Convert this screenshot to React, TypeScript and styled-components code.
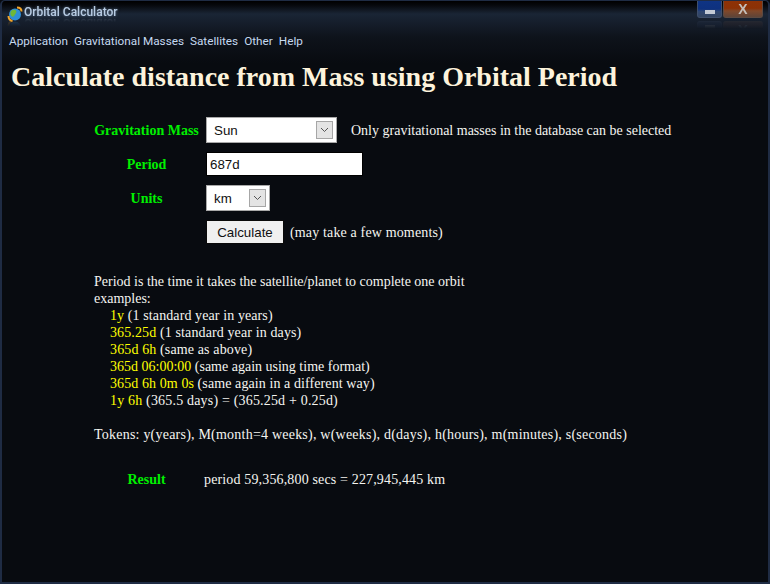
import React from "react";
import styled, { createGlobalStyle } from "styled-components";

const GlobalStyle = createGlobalStyle`
    html, body {
        margin: 0;
        padding: 0;
        background: #080b10;
    }
`;

const examples = [
    { code: "1y", note: "(1 standard year in years)", spacing: 0.1 },
    { code: "365.25d", note: "(1 standard year in days)", spacing: 0.12 },
    { code: "365d 6h", note: "(same as above)", spacing: 0.13 },
    { code: "365d 06:00:00", note: "(same again using time format)", spacing: 0 },
    { code: "365d 6h 0m 0s", note: "(same again in a different way)", spacing: 0.09 },
    { code: "1y 6h", note: "(365.5 days) = (365.25d + 0.25d)", spacing: 0.18 },
];

const menuItems = ["Application", "Gravitational Masses", "Satellites", "Other", "Help"];

const Window = styled.div`
    position: relative;
    width: 770px;
    height: 584px;
    box-sizing: border-box;
    overflow: hidden;
    border: 2px solid #1f2c44;
    border-top-width: 1px;
    border-radius: 5px 5px 0 0;
    background: linear-gradient(180deg, #000000 0, #06080c 4px, #1a2535 13px, #141c29 24px, #0e131b 36px, #080b10 62px);
    display: flex;
    flex-direction: column;
`;

const TitleBar = styled.div`
    height: 27px;
    flex: none;
    box-sizing: border-box;
    padding: 3px 0 0 5px;
    display: flex;
    align-items: flex-start;
    gap: 1px;
`;

const AppIcon = styled.svg`
    margin-top: 2px;
    flex: none;
    -webkit-box-reflect: below -2px linear-gradient(transparent 60%, rgba(255, 255, 255, 0.25));
`;

const AppTitle = styled.span`
    font: 500 12px Roboto, "Liberation Sans", Arial, sans-serif;
    line-height: 16px;
    color: #b9cde4;
    text-shadow: 0 0 3px rgba(170, 200, 235, 0.5);
    -webkit-box-reflect: below -5px linear-gradient(transparent 55%, rgba(255, 255, 255, 0.3));
`;

const WindowButtons = styled.div`
    position: absolute;
    top: 0;
    right: 5px;
    display: flex;
    gap: 1px;
    -webkit-box-reflect: below 3px linear-gradient(transparent 55%, rgba(255, 255, 255, 0.22));
`;

const WindowButton = styled.div<{ $close?: boolean }>`
    width: ${p => (p.$close ? "40px" : "25px")};
    height: 17px;
    box-sizing: border-box;
    border: 1px solid ${p => (p.$close ? "#5c4a42" : "#3f4f6c")};
    border-top: 0;
    border-radius: 0 0 3px 3px;
    display: grid;
    place-items: center;
    background: ${p =>
        p.$close
            ? "linear-gradient(180deg, #8e3206 0, #8c3105 45%, #80482a 62%, #5e4438 100%)"
            : "linear-gradient(180deg, #0f3484 0, #0e317f 50%, #2f4773 65%, #33445f 100%)"};
`;

const MinimizeGlyph = styled.span`
    width: 10px;
    height: 4px;
    margin-top: 5px;
    background: #c4cbd6;
`;

const CloseGlyph = styled.span`
    font: bold 14px "Liberation Sans", Arial, sans-serif;
    line-height: 13px;
    color: #c4bfba;
`;

const MenuBar = styled.nav`
    height: 26px;
    flex: none;
    box-sizing: border-box;
    padding: 5px 0 0 7px;
    display: flex;
    gap: 6px;
`;

const MenuItem = styled.span`
    font: 11.75px Roboto, "Liberation Sans", Arial, sans-serif;
    line-height: 16px;
    color: #c5d9f0;
`;

const Content = styled.main`
    flex: 1;
    font: 14px "Liberation Serif", "Times New Roman", serif;
    color: #f5f5f0;
`;

const Heading = styled.h1`
    margin: 0;
    padding: 7px 0 0 9px;
    font: bold 28px "Liberation Serif", "Times New Roman", serif;
    line-height: 32px;
    color: #fdf3dc;
`;

const FormGrid = styled.div`
    margin: 24px 0 0 92px;
    display: grid;
    grid-template-columns: 105px auto;
    row-gap: 9px;
    column-gap: 7px;
    justify-content: start;
    align-items: center;
`;

const FieldLabel = styled.label`
    padding-top: 2px;
    font: bold 14px "Liberation Serif", "Times New Roman", serif;
    color: #00f000;
    text-align: center;
    white-space: nowrap;
`;

const FieldRow = styled.div<{ $gap?: number }>`
    display: flex;
    align-items: center;
    gap: ${p => p.$gap ?? 14}px;
`;

const SelectBox = styled.div<{ $width: number }>`
    width: ${p => p.$width}px;
    height: 26px;
    box-sizing: border-box;
    border: 1px solid #a9a9a9;
    background: #ffffff;
    display: flex;
    align-items: center;
    justify-content: space-between;
    padding: 0 3px 0 7px;
    font: 13.33px "Liberation Sans", Arial, sans-serif;
    color: #111111;
`;

const SelectArrow = styled.span`
    width: 17px;
    height: 18px;
    box-sizing: border-box;
    border: 1px solid #a6a6a6;
    background: #e4e4e4;
    display: grid;
    place-items: center;
`;

const TextInput = styled.input`
    width: 157px;
    height: 24px;
    box-sizing: border-box;
    border: 1px solid #000000;
    outline: 0;
    padding: 0 3px;
    background: #ffffff;
    font: 13.33px "Liberation Sans", Arial, sans-serif;
    color: #111111;
`;

const CalcButton = styled.button`
    width: 78px;
    height: 24px;
    padding: 0;
    border: 1px solid #0a0a0a;
    background: #f0f0f0;
    font: 13.33px "Liberation Sans", Arial, sans-serif;
    color: #111111;
`;

const Hint = styled.span<{ $spacing?: number }>`
    padding-top: 2px;
    white-space: nowrap;
    letter-spacing: ${p => p.$spacing ?? 0}px;
`;

const HelpBlock = styled.section`
    margin: 29px 0 0 92px;
    line-height: 17px;
`;

const ExampleList = styled.div`
    padding-left: 16px;
`;

const ExampleRow = styled.div<{ $spacing: number }>`
    letter-spacing: ${p => p.$spacing}px;
`;

const Code = styled.span`
    color: #ffff00;
`;

const Tokens = styled.p`
    margin: 17px 0 0;
    letter-spacing: 0.22px;
`;

const ResultRow = styled.div`
    margin: 27px 0 0 92px;
    display: grid;
    grid-template-columns: 105px auto;
    column-gap: 5px;
    justify-content: start;
    align-items: center;
`;

const ResultText = styled.span`
    padding-top: 2px;
    letter-spacing: 0.15px;
`;

const Chevron = () => (
    <svg width="9" height="6" viewBox="0 0 9 6" fill="none" stroke="#555" strokeWidth="1">
        <path d="M1 1l3.5 3.5L8 1" />
    </svg>
);

const GlobeIcon = () => (
    <AppIcon width="16" height="16" viewBox="0 0 16 16">
        <circle cx="8" cy="8.5" r="6" fill="#2f8fd8" />
        <path d="M4 5c2-2 4-1.500 5-.5s0 3-1 4-1 3-3 2-2-3.500-1-5.500z" fill="#6fb83a" />
        <path d="M10 1.500c3 0 4.500 1.500 4.500 4" fill="none" stroke="#f2a52a" strokeWidth="2" />
        <path d="M1.500 10c0 3 1.500 4.500 4 5" fill="none" stroke="#f2a52a" strokeWidth="2" />
    </AppIcon>
);

const App: React.FunctionComponent = () => (
    <>
        <GlobalStyle />
        <Window>
            <TitleBar>
                <GlobeIcon />
                <AppTitle>Orbital Calculator</AppTitle>
            </TitleBar>
            <WindowButtons>
                <WindowButton>
                    <MinimizeGlyph />
                </WindowButton>
                <WindowButton $close>
                    <CloseGlyph>X</CloseGlyph>
                </WindowButton>
            </WindowButtons>
            <MenuBar>
                {menuItems.map(item => (
                    <MenuItem key={item}>{item}</MenuItem>
                ))}
            </MenuBar>
            <Content>
                <Heading>Calculate distance from Mass using Orbital Period</Heading>
                <FormGrid>
                    <FieldLabel>Gravitation Mass</FieldLabel>
                    <FieldRow>
                        <SelectBox $width={131}>
                            Sun
                            <SelectArrow>
                                <Chevron />
                            </SelectArrow>
                        </SelectBox>
                        <Hint>Only gravitational masses in the database can be selected</Hint>
                    </FieldRow>
                    <FieldLabel>Period</FieldLabel>
                    <FieldRow>
                        <TextInput defaultValue="687d" />
                    </FieldRow>
                    <FieldLabel>Units</FieldLabel>
                    <FieldRow>
                        <SelectBox $width={64}>
                            km
                            <SelectArrow>
                                <Chevron />
                            </SelectArrow>
                        </SelectBox>
                    </FieldRow>
                    <span />
                    <FieldRow $gap={6}>
                        <CalcButton>Calculate</CalcButton>
                        <Hint $spacing={0.15}>(may take a few moments)</Hint>
                    </FieldRow>
                </FormGrid>
                <HelpBlock>
                    <div>Period is the time it takes the satellite/planet to complete one orbit</div>
                    <div>examples:</div>
                    <ExampleList>
                        {examples.map(example => (
                            <ExampleRow key={example.code} $spacing={example.spacing}>
                                <Code>{example.code}</Code> {example.note}
                            </ExampleRow>
                        ))}
                    </ExampleList>
                    <Tokens>
                        Tokens: y(years), M(month=4 weeks), w(weeks), d(days), h(hours), m(minutes), s(seconds)
                    </Tokens>
                </HelpBlock>
                <ResultRow>
                    <FieldLabel>Result</FieldLabel>
                    <ResultText>period 59,356,800 secs = 227,945,445 km</ResultText>
                </ResultRow>
            </Content>
        </Window>
    </>
);

export default App;
